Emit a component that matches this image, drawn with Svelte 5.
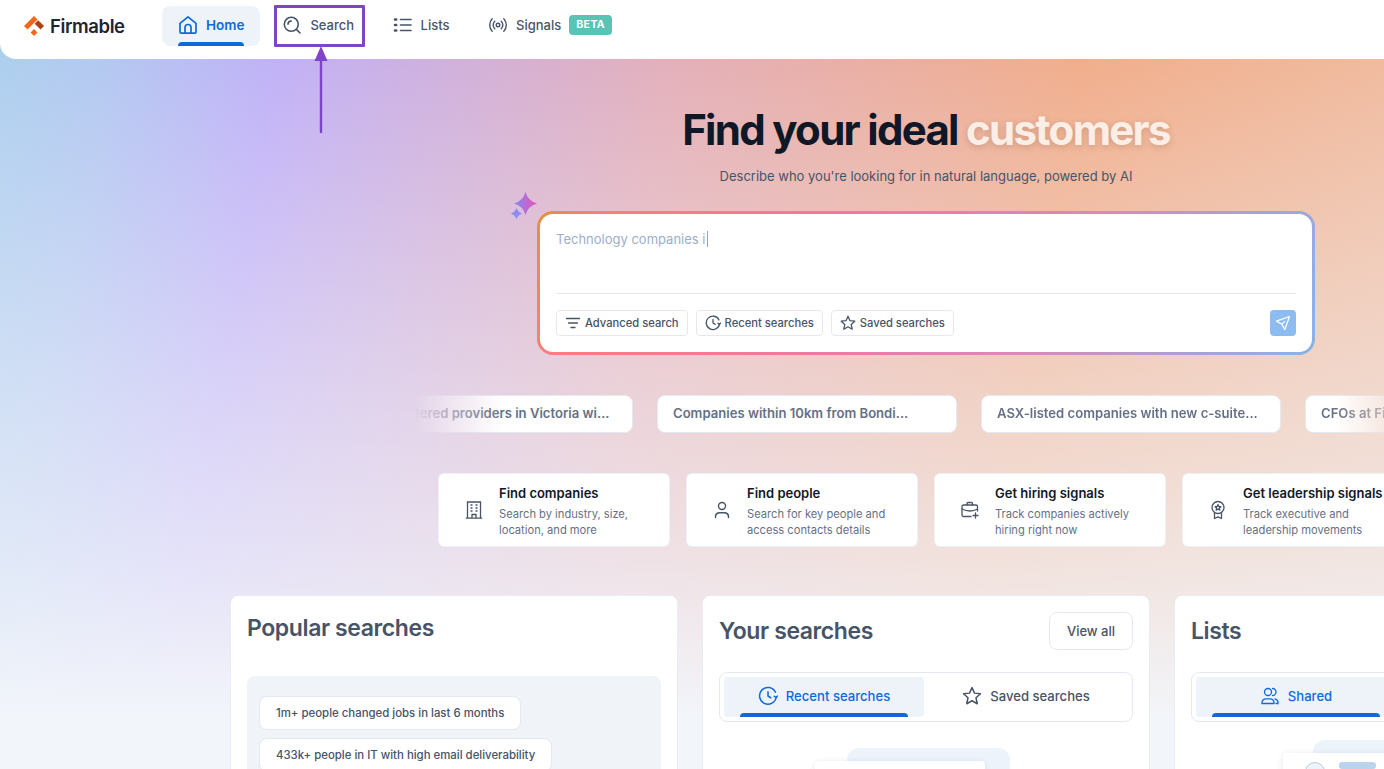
<script>
	const chips = [
		'NDIS registered providers in Victoria wi...',
		'Companies within 10km from Bondi...',
		'ASX-listed companies with new c-suite...',
		'CFOs at Fintech companies in Sydney...'
	];
	const actions = [
		{ id: 'building', title: 'Find companies', lines: ['Search by industry, size,', 'location, and more'] },
		{ id: 'person', title: 'Find people', lines: ['Search for key people and', 'access contacts details'] },
		{ id: 'case', title: 'Get hiring signals', lines: ['Track companies actively', 'hiring right now'] },
		{ id: 'award', title: 'Get leadership signals', lines: ['Track executive and', 'leadership movements'] }
	];
	const popular = ['1m+ people changed jobs in last 6 months', '433k+ people in IT with high email deliverability'];
</script>

<div class="page">
	<header class="nav">
		<div class="logo">
			<svg width="20" height="20" viewBox="0 0 20 20">
				<path d="M10 0 13.500 3.500 3.500 13.500 0 10z" fill="#f4671a"/>
				<path d="M14.200 4.200 20 10 16.500 13.500 10.700 7.700z" fill="#a8430f"/>
				<path d="M10 13 13.400 16.500 10 20 6.600 16.500z" fill="#f4671a"/>
			</svg>
			<span>Firmable</span>
		</div>
		<nav class="links">
			<a class="link active">
				<svg width="20" height="20" viewBox="0 0 20 20" fill="none" stroke="currentColor" stroke-width="1.700" stroke-linejoin="round"><path d="M2 8.400 10 1.800l8 6.600V17a1.200 1.200 0 0 1-1.200 1.200H3.200A1.200 1.200 0 0 1 2 17z"/><path d="M7 18.200v-5.700a3 3 0 0 1 6 0v5.700"/></svg>
				Home
			</a>
			<a class="link">
				<svg width="20" height="20" viewBox="0 0 20 20" fill="none" stroke="currentColor" stroke-width="1.600" stroke-linecap="round"><circle cx="9.300" cy="9.300" r="7"/><path d="M14.400 14.400 18 18M6 9.300A3.400 3.400 0 0 1 9.300 6"/></svg>
				Search
			</a>
			<a class="link">
				<svg width="20" height="20" viewBox="0 0 20 20" fill="none" stroke="currentColor" stroke-width="1.600" stroke-linecap="round"><path d="M7.500 4.500h10.500M7.500 10h10.500M7.500 15.500h10.500"/><path d="M2 4.500h1.200M2 10h1.200M2 15.500h1.200" stroke-width="2.600"/></svg>
				Lists
			</a>
			<a class="link">
				<svg width="20" height="20" viewBox="0 0 20 20" fill="none" stroke="currentColor" stroke-width="1.400" stroke-linecap="round"><circle cx="10" cy="10" r="1.800"/><path d="M6.800 6.300a5 5 0 0 0 0 7.400M13.200 6.300a5 5 0 0 1 0 7.400M4.200 3.800a9 9 0 0 0 0 12.400M15.800 3.800a9 9 0 0 1 0 12.400"/></svg>
				Signals
				<span class="beta">BETA</span>
			</a>
		</nav>
	</header>

	<main class="main">
		<section class="hero">
			<h1>Find your ideal <em>customers</em></h1>
			<p>Describe who you're looking for in natural language, powered by AI</p>
			<div class="box-wrap">
				<svg class="sparkle" width="30" height="30" viewBox="0 0 30 30">
					<defs>
						<linearGradient id="sp" x1="0" y1="0" x2="1" y2="0"><stop offset="0" stop-color="#7f8cf5"/><stop offset="1" stop-color="#ee4fb5"/></linearGradient>
					</defs>
					<path d="M17.500 1Q20 10 29 12.500 20 15 17.500 24 15 15 6 12.500 15 10 17.500 1Z" fill="url(#sp)"/>
					<path d="M8.500 17Q10 21 14 22.500 10 24 8.500 28 7 24 3 22.500 7 21 8.500 17Z" fill="#8a8cf5"/>
				</svg>
				<div class="box">
					<div class="typed">Technology companies i<span class="caret"></span></div>
					<div class="box-foot">
						<button class="mini">
							<svg width="16" height="16" viewBox="0 0 16 16" fill="none" stroke="#475467" stroke-width="1.300" stroke-linecap="round"><path d="M1.500 3.500h13M3.500 8h9M6 12.500h4"/></svg>
							Advanced search
						</button>
						<button class="mini">
							<svg width="16" height="16" viewBox="0 0 16 16" fill="none" stroke="#475467" stroke-width="1.300" stroke-linecap="round" stroke-linejoin="round"><path d="M14.600 8.600A6.700 6.700 0 1 1 14 5"/><path d="M8 4.500V8l2.200 1.400"/><path d="M13 8.200l1.500 1.200 1-1.300"/></svg>
							Recent searches
						</button>
						<button class="mini">
							<svg width="16" height="16" viewBox="0 0 16 16" fill="none" stroke="#475467" stroke-width="1.300" stroke-linejoin="round"><path d="M8 1.300l2 4.400 4.800.5-3.600 3.200 1 4.800L8 11.800l-4.200 2.400 1-4.800L1.200 6.200 6 5.700z"/></svg>
							Saved searches
						</button>
						<button class="send" aria-label="Send">
							<svg width="16" height="16" viewBox="0 0 16 16" fill="none" stroke="#fff" stroke-width="1.300" stroke-linejoin="round"><path d="M14.500 1.500 1.500 6.200l5.400 2.900 2.900 5.400zM6.900 9.100l3-3"/></svg>
						</button>
					</div>
				</div>
			</div>
		</section>

		<div class="chips">
			<div class="chip-track">
				{#each chips as chip}
					<div class="chip">{chip}</div>
				{/each}
			</div>
		</div>

		<div class="actions">
			{#each actions as a}
				<div class="action">
					<span class="action-icon">
						{#if a.id === 'building'}
							<svg width="20" height="20" viewBox="0 0 20 20" fill="none" stroke="#475467" stroke-width="1.300"><path d="M1.800 18.200h16.400M3.500 18V2h13v16M8 18v-3.500h4V18"/><path d="M6.500 5h2M11.500 5h2M6.500 8h2M11.500 8h2M6.500 11h2M11.500 11h2"/></svg>
						{:else if a.id === 'person'}
							<svg width="20" height="20" viewBox="0 0 20 20" fill="none" stroke="#475467" stroke-width="1.400" stroke-linecap="round"><circle cx="10" cy="6" r="3.500"/><path d="M3.500 17.500v-1.500a4 4 0 0 1 4-3.200h5a4 4 0 0 1 4 3.200v1.500"/></svg>
						{:else if a.id === 'case'}
							<svg width="20" height="20" viewBox="0 0 20 20" fill="none" stroke="#475467" stroke-width="1.300" stroke-linecap="round" stroke-linejoin="round"><path d="M11 16.500H3.500a1.500 1.500 0 0 1-1.500-1.500V6.500A1.500 1.500 0 0 1 3.500 5h12.500a1.500 1.500 0 0 1 1.500 1.500V11"/><path d="M7 5V3.500A1 1 0 0 1 8 2.500h3.500a1 1 0 0 1 1 1V5M2 9c3 1.500 6 2 8 2s5-.5 7.500-2M15.500 13v5M13 15.500h5"/></svg>
						{:else}
							<svg width="20" height="20" viewBox="0 0 20 20" fill="none" stroke="#475467" stroke-width="1.300" stroke-linejoin="round"><circle cx="10" cy="7.500" r="6"/><path d="M10 4.600l.9 1.900 2 .2-1.500 1.400.4 2L10 9.200l-1.800.9.400-2L7.100 6.700l2-.2zM6.500 12.500V18.500L10 16.800l3.500 1.700V12.500"/></svg>
						{/if}
					</span>
					<div>
						<h3>{a.title}</h3>
						<p>{a.lines[0]}<br />{a.lines[1]}</p>
					</div>
				</div>
			{/each}
		</div>

		<div class="panels">
			<section class="panel">
				<div class="panel-head plain"><h2>Popular searches</h2></div>
				<div class="popular">
					{#each popular as item}
						<div class="pop-chip">{item}</div>
					{/each}
				</div>
			</section>

			<section class="panel">
				<div class="panel-head">
					<h2>Your searches</h2>
					<button class="view">View all</button>
				</div>
				<div class="tabs">
					<div class="tab on">
						<svg width="20" height="20" viewBox="0 0 16 16" fill="none" stroke="currentColor" stroke-width="1.200" stroke-linecap="round" stroke-linejoin="round"><path d="M14.600 8.600A6.700 6.700 0 1 1 14 5"/><path d="M8 4.500V8l2.200 1.400"/><path d="M13 8.200l1.500 1.200 1-1.300"/></svg>
						Recent searches
					</div>
					<div class="tab">
						<svg width="20" height="20" viewBox="0 0 16 16" fill="none" stroke="currentColor" stroke-width="1.200" stroke-linejoin="round"><path d="M8 1.300l2 4.400 4.800.5-3.600 3.200 1 4.800L8 11.800l-4.200 2.400 1-4.800L1.200 6.200 6 5.700z"/></svg>
						Saved searches
					</div>
				</div>
				<div class="art one"><div class="art-back"></div><div class="art-front"></div></div>
			</section>

			<section class="panel">
				<div class="panel-head"><h2>Lists</h2></div>
				<div class="tabs">
					<div class="tab on">
						<svg width="20" height="20" viewBox="0 0 20 20" fill="none" stroke="currentColor" stroke-width="1.300" stroke-linecap="round"><circle cx="8" cy="6" r="3.500"/><path d="M2 17.500v-1.200a4 4 0 0 1 4-3.500h4a4 4 0 0 1 4 3.500v1.200zM12.500 2.500a3.500 3.500 0 0 1 0 7M15 12.800a4 4 0 0 1 3 3.500v1.200h-2"/></svg>
						Shared
					</div>
					<div class="tab">Private</div>
				</div>
				<div class="art two">
					<div class="art-back"></div>
					<div class="art-front"><span class="dot"></span><span class="bar"></span></div>
				</div>
			</section>
		</div>
	</main>

	<!-- annotation drawn over the screenshot -->
	<div class="mark"></div>
	<div class="arrow">
		<svg width="14" height="88" viewBox="0 0 14 88"><path d="M7 0 13.500 15H8.200V86a1.200 1.200 0 0 1-2.400 0V15H.5z" fill="#7e45c8"/></svg>
	</div>
</div>

<style>
:global(body) {
	margin: 0;
	font-family: "Inter", "Open Sans", sans-serif;
	color: #475467;
}

.page {
	position: relative;
	width: 1384px;
	height: 769px;
	overflow: hidden;
	background:
		linear-gradient(to bottom, rgba(242, 245, 250, 0) 59px, rgba(242, 245, 250, .5) 400px, rgba(242, 245, 250, .72) 560px, rgba(242, 245, 250, 1) 720px),
		linear-gradient(100deg, #add0ee 0%, #b4c8f1 8%, #c1b1f7 19%, #e4b0ba 45%, #f1ae8c 72%, #f0c0a6 100%);
}

.nav {
	display: flex;
	height: 59px;
	padding: 6px 0 0 24px;
	box-sizing: border-box;
	background: #fff;
	border-radius: 0 0 0 16px;
}

.logo {
	display: flex;
	align-items: center;
	gap: 6px;
	width: 138px;
	height: 40px;
	font-size: 18.500px;
	font-weight: 600;
	letter-spacing: -.4px;
	color: #1d2433;
}

.links {
	display: flex;
	gap: 18.500px;
	height: 40px;
}

.link {
	position: relative;
	display: flex;
	align-items: center;
	gap: 8px;
	padding: 0 10px 2px;
	border-radius: 8px;
	font-size: 13px;
	font-weight: 500;
	color: #475467;
}

.link.active {
	margin-right: -6.500px;
	padding: 0 16px 2px;
	background: #eef3fa;
	color: #0f6ad8;
	font-size: 13.500px;
	font-weight: 600;
}

.link.active::after {
	content: "";
	position: absolute;
	left: 16px;
	right: 16px;
	bottom: 0;
	height: 4px;
	border-radius: 4px 4px 0 0;
	background: #0f6ad8;
}

.beta {
	padding: 0 7px;
	height: 20px;
	line-height: 20px;
	border-radius: 4px;
	background: #59c3b6;
	color: #fff;
	font-size: 10.500px;
	font-weight: 700;
	letter-spacing: .4px;
}

.main {
	display: flex;
	flex-direction: column;
}

.hero {
	display: flex;
	flex-direction: column;
	align-items: center;
	margin-left: 468px;
	width: 916px;
}

h1 {
	margin: 44px 0 0;
	font-size: 42px;
	line-height: 54px;
	font-weight: 700;
	letter-spacing: -1.700px;
	color: #101828;
}

h1 em {
	font-style: normal;
	color: #fbeee6;
	text-shadow: 0 2px 6px rgba(120, 70, 40, .25);
}

.hero > p {
	margin: 9px 0 0;
	font-size: 13px;
	line-height: 20px;
	color: #475467;
}

.box-wrap {
	position: relative;
	margin-top: 25px;
	width: 778px;
}

.sparkle {
	position: absolute;
	left: -29px;
	top: -20px;
}

.box {
	box-sizing: border-box;
	height: 144px;
	padding: 15px 16px 16px;
	border: 3px solid transparent;
	border-radius: 16px;
	background:
		linear-gradient(#fff, #fff) padding-box,
		linear-gradient(115deg, #e2923f 0%, #f77e80 9%, #f2789a 35%, #e680b8 60%, #86b4e8 100%) border-box;
	display: flex;
	flex-direction: column;
}

.typed {
	height: 64px;
	font-size: 13px;
	line-height: 20px;
	color: #a0aec4;
}

.caret {
	display: inline-block;
	width: 1px;
	height: 16px;
	margin-left: 1px;
	vertical-align: -3px;
	background: #98a2b3;
}

.box-foot {
	display: flex;
	align-items: center;
	gap: 8px;
	padding-top: 16px;
	border-top: 1px solid #e4e7ec;
}

.mini {
	display: flex;
	align-items: center;
	gap: 4px;
	height: 26px;
	padding: 0 8px;
	border: 1px solid #e4e9f1;
	border-radius: 4px;
	background: #fff;
	font: 500 11.200px "Inter", sans-serif;
	color: #475467;
}

.send {
	display: flex;
	align-items: center;
	justify-content: center;
	width: 26px;
	height: 26px;
	margin-left: auto;
	padding: 0;
	border: 0;
	border-radius: 4px;
	background: #8dbcf0;
}

.chips {
	margin: 40px 0 0 414px;
	overflow: hidden;
	-webkit-mask-image: linear-gradient(to right, transparent 0, #000 90px, #000 920px, transparent 1000px);
	mask-image: linear-gradient(to right, transparent 0, #000 90px, #000 920px, transparent 1000px);
}

.chip-track {
	display: flex;
	gap: 24px;
	margin-left: -81px;
	width: 1400px;
}

.chip {
	box-sizing: border-box;
	flex: none;
	width: 300px;
	height: 38px;
	padding: 0 15px 2px;
	display: flex;
	align-items: center;
	border: 1px solid #e4e9f1;
	border-radius: 8px;
	background: #fff;
	font-size: 13.100px;
	font-weight: 600;
	color: #667085;
	white-space: nowrap;
	overflow: hidden;
}

.actions {
	display: flex;
	gap: 16px;
	margin: 40px 0 0 438px;
}

.action {
	box-sizing: border-box;
	flex: none;
	width: 232px;
	height: 74px;
	display: flex;
	align-items: center;
	gap: 15px;
	padding: 2px 16px 0 25px;
	background: #fff;
	border: 1px solid #edf0f5;
	border-radius: 6px;
}

.action-icon {
	display: flex;
	margin-top: -2px;
}

.action h3 {
	margin: 0 0 4px;
	font-size: 13px;
	line-height: 18px;
	font-weight: 600;
	color: #101828;
	white-space: nowrap;
}

.action p {
	margin: 0;
	font-size: 11.150px;
	line-height: 16px;
	color: #667085;
	white-space: nowrap;
}

.panels {
	display: flex;
	gap: 24px;
	margin: 48px 0 0 230px;
}

.panel {
	position: relative;
	box-sizing: border-box;
	flex: none;
	width: 448px;
	height: 300px;
	padding: 16px;
	background: #fff;
	border: 1px solid #e8ecf3;
	border-radius: 8px;
}

.panel-head {
	display: flex;
	align-items: center;
	justify-content: space-between;
	height: 38px;
	margin-bottom: 22px;
}

.panel-head.plain {
	height: 32px;
	margin-bottom: 32px;
}

h2 {
	margin: 0;
	font-size: 23px;
	font-weight: 600;
	letter-spacing: -.4px;
	color: #475467;
}

.view {
	width: 84px;
	height: 38px;
	padding: 0;
	background: #fff;
	border: 1px solid #e4e9f1;
	border-radius: 8px;
	font: 500 13px "Inter", sans-serif;
	color: #475467;
}

.popular {
	display: flex;
	flex-direction: column;
	align-items: flex-start;
	gap: 8px;
	height: 200px;
	padding: 20px 12px;
	background: #f0f3f8;
	border-radius: 8px;
}

.pop-chip {
	height: 32px;
	line-height: 32px;
	padding: 0 16px;
	background: #fff;
	border: 1px solid #e4e9f1;
	border-radius: 8px;
	font-size: 11.400px;
	font-weight: 500;
	color: #475467;
}

.tabs {
	box-sizing: border-box;
	display: flex;
	height: 50px;
	padding: 4px;
	background: #fff;
	border: 1px solid #e4e9f1;
	border-radius: 8px;
}

.tab {
	position: relative;
	flex: 1;
	display: flex;
	align-items: center;
	justify-content: center;
	gap: 8px;
	padding-bottom: 2px;
	border-radius: 4px;
	font-size: 13.100px;
	font-weight: 500;
	color: #475467;
}

.tab.on {
	flex: 0 0 200px;
	background: #eef3fa;
	color: #0f6ad8;
}

.tab.on::after {
	content: "";
	position: absolute;
	left: 16px;
	right: 16px;
	bottom: 0;
	height: 4px;
	border-radius: 4px 4px 0 0;
	background: #0f6ad8;
}

.art {
	position: relative;
	margin-top: 26px;
}

.art-back {
	width: 163px;
	height: 80px;
	margin-left: 128px;
	background: #edf3fb;
	border-radius: 12px;
}

.art-front {
	position: absolute;
	left: 96px;
	top: 13px;
	width: 170px;
	height: 60px;
	background: #fff;
	border-radius: 4px;
	box-shadow: 0 1px 6px rgba(40, 60, 90, .12);
}

.art.two {
	margin-top: 18px;
}

.art.two .art-back {
	margin-left: 122px;
}

.art.two .art-front {
	left: 92px;
}

.dot {
	position: absolute;
	left: 22px;
	top: 9px;
	width: 20px;
	height: 20px;
	box-sizing: border-box;
	border: 1px solid #b8c8dc;
	border-radius: 50%;
	background: #eef3fa;
}

.bar {
	position: absolute;
	left: 56px;
	top: 9px;
	width: 37px;
	height: 7px;
	border-radius: 3px;
	background: #bcd3ee;
}

.mark {
	position: absolute;
	left: 274px;
	top: 5px;
	width: 91px;
	height: 42px;
	box-sizing: border-box;
	border: 3px solid #7e45c8;
	border-radius: 1px;
}

.arrow {
	position: absolute;
	left: 314px;
	top: 46px;
	display: flex;
}
</style>
